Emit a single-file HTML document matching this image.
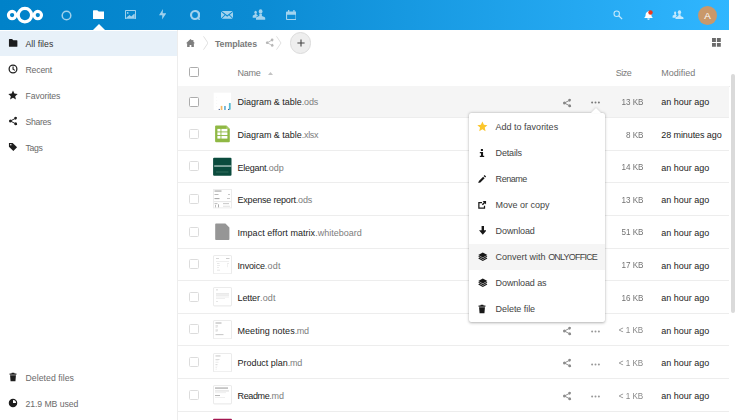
<!DOCTYPE html>
<html><head><meta charset="utf-8"><title>Files - Nextcloud</title>
<style>
*{box-sizing:border-box;margin:0;padding:0}
html,body{width:736px;height:420px;overflow:hidden;background:#fff;font-family:"Liberation Sans",sans-serif;font-size:9px;color:#222}
#hdr{position:absolute;left:0;top:0;width:729.3px;height:29.5px;background:linear-gradient(90deg,#0082c9 0%,#0b8bd3 35%,#30b6ff 100%)}
#hdr svg{position:absolute}
#side{position:absolute;left:0;top:29.7px;width:177.6px;height:391px;background:#fff;border-right:1px solid #ededed}
.nav{position:absolute;left:0;width:177px;height:26px;line-height:28.6px;color:#6a6a6a;font-size:8.7px}
.nav.act{background:linear-gradient(#fff 0,#fff 1.3px,#e8f1f9 1.3px,#e8f1f9 100%);color:#333}
.nic{position:absolute;left:7.5px;top:8px;width:10px;height:10px;line-height:0;opacity:.88}
.ntx{position:absolute;left:25.5px;top:0;white-space:nowrap}
.row{position:absolute;left:178px;width:551.1px;height:32.7px;border-bottom:1px solid #ededed}
.row.hl{background:#f5f5f5}
.row span{position:absolute;white-space:nowrap}
.chk{left:10.6px;top:calc(50% - 5.1px);width:10px;height:10px;border:1px solid #dcdcdc;border-radius:1.5px;background:#fff}
.chk.dark{border-color:#acacac}
.thumb{left:35.3px;top:calc(50% - 9.7px);width:19px;height:19px;line-height:0}
.fname{left:59.5px;top:0;color:#1c1c1c;font-size:9px}
.fname .ext{position:static;color:#7d7d7d}
.a-share{left:383.7px;top:calc(50% - 3.9px);line-height:0;opacity:.45}
.a-more{left:412.6px;top:calc(50% + .4px);line-height:0;opacity:.4}
.a-more.on{opacity:.5;margin-top:-1px}
.fsize{right:85.7px;top:-.5px;color:#727272;transform:scaleX(.9);transform-origin:100% 50%}
.fmod{left:483.3px;top:0;color:#1c1c1c}
#thead{position:absolute;left:178px;top:56px;width:551.5px;height:31px;border-bottom:1px solid #ededed;color:#7a7a7a}
#thead span{position:absolute;white-space:nowrap;line-height:34.5px}
#menu{position:absolute;left:469.3px;top:112.5px;width:136.1px;height:209.6px;background:#fff;border-radius:2px;box-shadow:0 .8px 3px rgba(0,0,0,.3),0 0 1px rgba(0,0,0,.12)}
#menu:before{content:"";position:absolute;left:121.3px;top:-5px;width:0;height:0;border-left:5px solid transparent;border-right:5px solid transparent;border-bottom:5.5px solid #fff;filter:drop-shadow(0 -1px 1px rgba(0,0,0,.12))}
.mi{position:relative;height:26px;line-height:26.4px;top:1.5px;color:#444}
.mi.hov{background:#f5f5f5}
.mic{position:absolute;left:7.8px;top:7.5px;line-height:0;opacity:.9}
.mtx{position:absolute;left:26.3px;top:0;white-space:nowrap}
.oo{letter-spacing:-.79px}
#sb{position:absolute;left:730.9px;top:73.9px;width:4.2px;height:239.3px;border-radius:2px;background:#dadada}
</style></head><body>
<div id="hdr">
<svg style="left:0;top:0" width="50" height="29" viewBox="0 0 50 29"><g fill="none" stroke="#fff"><circle cx="24.9" cy="15.1" r="6.7" stroke-width="3.2"/><circle cx="12.1" cy="15.1" r="3.7" stroke-width="3.1"/><circle cx="37.8" cy="15.1" r="3.7" stroke-width="3.1"/></g></svg>
<svg style="left:60.8px;top:9.7px;opacity:.62" width="11" height="11" viewBox="0 0 11 11"><circle cx="5.5" cy="5.5" r="4.3" fill="none" stroke="#fff" stroke-width="1.5"/></svg>
<svg style="left:92.8px;top:9.6px" width="11.4" height="9.6" viewBox="0 0 16 13.5"><path d="M0 1.2a1 1 0 0 1 1-1h5l2 2h7a1 1 0 0 1 1 1v9.3a1 1 0 0 1-1 1H1a1 1 0 0 1-1-1z" fill="#fff"/></svg>
<svg style="left:92.5px;top:24px" width="12" height="6" viewBox="0 0 12 6"><path d="M0 6L6 0l6 6z" fill="#fff"/></svg>
<svg style="left:125.2px;top:9.9px;opacity:.62" width="11" height="9.2" viewBox="0 0 11 9.2"><path d="M.8 0h9.4a.8.8 0 0 1 .800.8v7.6a.8.8 0 0 1-.800.8H.8a.8.8 0 0 1-.800-.800V.8A.8.8 0 0 1 .8 0zm.200 1v7.2h9V1zM1.4 7.9V7.5L4.6 5.1l1.6 1.5 3-2.8.5.4v3.7zM2.7 2.1a.85.85 0 1 1 0 1.7.85.85 0 0 1 0-1.7z" fill="#fff" fill-rule="evenodd"/></svg>
<svg style="left:159px;top:9.3px;opacity:.62" width="7.4" height="10.4" viewBox="0 0 7.4 10.4"><path d="M4 0L0 6.3h3.3L3.1 10.4 7.4 4.3H3.7z" fill="#fff"/></svg>
<svg style="left:189.5px;top:9.7px;opacity:.62" width="10.6" height="10.2" viewBox="0 0 10.6 10.2"><path d="M5 0a5 5 0 1 0 2.8 9.15c.7.6 1.6.950 2.6 1.05-.6-.7-.9-1.4-1-2.2A5 5 0 0 0 5 0zm0 2.1a2.9 2.9 0 1 1 0 5.8 2.9 2.9 0 0 1 0-5.8z" fill="#fff" fill-rule="evenodd"/></svg>
<svg style="left:220.5px;top:11.2px;opacity:.62" width="12.4" height="7.8" viewBox="0 0 16 10"><path d="M.8 0h14.4L8 5.3zM0 .8l4.8 4L0 9.4zM16 .8v8.6l-4.8-4.6zM5.7 5.6L8 7.3l2.3-1.7 4.7 4.4H1z" fill="#fff"/></svg>
<svg style="left:252px;top:9px;opacity:.62" width="14" height="11" viewBox="0 0 14 11"><ellipse cx="8.6" cy="2.5" rx="1.9" ry="2.3" fill="#fff"/><path d="M4 10.8V9c0-.5.3-.9.8-1.1l2.5-1V5h2.6v1.9l2.5 1c.5.2.8.6.8 1.1v1.8z" fill="#fff"/><ellipse cx="3.6" cy="3.3" rx="1.25" ry="1.55" fill="#fff"/><path d="M.7 8.8V7.1c0-.5.3-.8.7-.95L2.8 5.6V4.4h1.7V5.6l1.6.9-.9.4c-.6.3-.9.7-.9 1.4v.5z" fill="#fff"/></svg>
<svg style="left:285.6px;top:9.8px;opacity:.62" width="10.6" height="10" viewBox="0 0 10.6 10"><path d="M2 0h1.3v1.5h4V0h1.3v1.5H9.6a1 1 0 0 1 1 1V9a1 1 0 0 1-1 1H1a1 1 0 0 1-1-1V2.5a1 1 0 0 1 1-1H2zM1.1 4.7V8.9h8.4V4.7z" fill="#fff" fill-rule="evenodd"/></svg>
<svg style="left:613.4px;top:9.5px;opacity:.72" width="10" height="10" viewBox="0 0 14 14"><circle cx="5.2" cy="5.2" r="3.8" fill="none" stroke="#fff" stroke-width="1.5"/><path d="M8 8l4.8 4.8" stroke="#fff" stroke-width="1.8"/></svg>
<svg style="left:643px;top:9.5px" width="11" height="11" viewBox="0 0 16 16"><path d="M8 1.5c.7 0 1.2.5 1.2 1.1 2 .6 3 2.3 3 4.4 0 3 1.3 3.5 2 4.5H1.8c.7-1 2-1.5 2-4.5 0-2.1 1-3.8 3-4.4 0-.6.5-1.1 1.2-1.1zM6.2 12.5h3.6a1.8 1.8 0 0 1-3.6 0z" fill="#fff"/></svg>
<svg style="left:648.3px;top:9.5px" width="5" height="5" viewBox="0 0 5 5"><circle cx="2.5" cy="2.5" r="2.2" fill="#ee3a1d"/></svg>
<svg style="left:672.4px;top:9.7px;opacity:.72" width="12.2" height="9.6" viewBox="0 0 14 11"><ellipse cx="8.6" cy="2.5" rx="1.9" ry="2.3" fill="#fff"/><path d="M4 10.8V9c0-.5.3-.9.8-1.1l2.5-1V5h2.6v1.9l2.5 1c.5.2.8.6.8 1.1v1.8z" fill="#fff"/><ellipse cx="3.6" cy="3.3" rx="1.25" ry="1.55" fill="#fff"/><path d="M.7 8.8V7.1c0-.5.3-.8.7-.95L2.8 5.6V4.4h1.7V5.6l1.6.9-.9.4c-.6.3-.9.7-.9 1.4v.5z" fill="#fff"/></svg>
<div style="position:absolute;left:698px;top:5.5px;width:19px;height:19px;border-radius:50%;background:#c9986a;color:#fff;font-size:9.8px;line-height:19px;text-align:center">A</div>
</div>

<div id="side">
<div class="nav act" style="top:0.3px"><span class="nic"><svg width="10" height="10" viewBox="0 0 16 16"><path d="M1.5 2.5a1 1 0 0 1 1-1h4l2 2h5.5a1 1 0 0 1 1 1v8.5a1 1 0 0 1-1 1h-11.5a1 1 0 0 1-1-1z" fill="#000"/></svg></span><span class="ntx" style="letter-spacing:0.03px">All files</span></div><div class="nav" style="top:26.3px"><span class="nic"><svg width="10" height="10" viewBox="0 0 16 16"><circle cx="8" cy="8" r="6.2" fill="none" stroke="#000" stroke-width="2"/><path d="M7.2 3.8h1.8v4l2.6 1.6-.9 1.4-3.5-2.1z" fill="#000"/></svg></span><span class="ntx" style="letter-spacing:-0.18px">Recent</span></div><div class="nav" style="top:52.3px"><span class="nic"><svg width="10" height="10" viewBox="0 0 16 16"><path d="M8 .8l2.2 4.9 5.3.5-4 3.6 1.2 5.3L8 12.3 3.3 15.1l1.2-5.3-4-3.6 5.3-.5z" fill="#000"/></svg></span><span class="ntx" style="letter-spacing:-0.1px">Favorites</span></div><div class="nav" style="top:78.3px"><span class="nic"><svg width="10" height="10" viewBox="0 0 16 16"><path d="M12.2 1a2.3 2.3 0 0 0-2.2 2.9L5.4 6.3a2.3 2.3 0 1 0 0 3.4L10 12.1a2.3 2.3 0 1 0 .6-1.2L6 8.5a2.3 2.3 0 0 0 0-1l4.6-2.4A2.3 2.3 0 1 0 12.2 1z" fill="#000"/></svg></span><span class="ntx" style="letter-spacing:-0.33px">Shares</span></div><div class="nav" style="top:104.3px"><span class="nic"><svg width="10" height="10" viewBox="0 0 16 16"><path d="M1.5 1.5h6l7 7-6 6-7-7zM4.5 3.3a1.2 1.2 0 1 0 0 2.4 1.2 1.2 0 0 0 0-2.4z" fill="#000" fill-rule="evenodd"/></svg></span><span class="ntx" style="letter-spacing:-0.3px">Tags</span></div><div class="nav" style="top:334.3px"><span class="nic"><svg style="margin-left:.4px" width="10" height="10" viewBox="0 0 16 16"><path d="M6 1.3h4l.6 1.1h2.9v1.9H2.5V2.4h2.9zM3.3 5.3h9.4l-.8 9.4H4.1z" fill="#000"/></svg></span><span class="ntx" style="letter-spacing:0.05px">Deleted files</span></div><div class="nav" style="top:360.3px"><span class="nic"><svg width="10" height="10" viewBox="0 0 16 16"><path d="M8 1.2a6.8 6.8 0 1 0 0 13.6 6.8 6.8 0 0 0 0-13.6zm0 2a4.8 4.8 0 0 1 4.8 4.8H8z" fill="#000" fill-rule="evenodd"/></svg></span><span class="ntx" style="letter-spacing:-0.08px">21.9 MB used</span></div>
</div>

<div id="crumbs" style="position:absolute;left:178px;top:30px;width:551px;height:26px">
<svg style="position:absolute;left:8.2px;top:8.6px;opacity:.5" width="9" height="8.5" viewBox="0 0 16 15"><path d="M8 0l3 2.8V1.5h2.2v3.4L16 7.5h-2V15H9.5v-4.5h-3V15H2V7.5H0z" fill="#000"/></svg>
<svg style="position:absolute;left:24.5px;top:6px" width="5.5" height="14" viewBox="0 0 5.5 14"><path d="M.5.3l4.5 6.7-4.5 6.7" fill="none" stroke="#e0e0e0" stroke-width="1"/></svg>
<span style="position:absolute;left:37px;top:0;line-height:28.5px;font-weight:bold;font-size:8.8px;letter-spacing:-.1px;color:#7a7a7a;white-space:nowrap">Templates</span>
<svg style="position:absolute;left:86.6px;top:8px;opacity:.28" width="9.4" height="9.4" viewBox="0 0 16 16"><path d="M12.2 1a2.3 2.3 0 0 0-2.2 2.9L5.4 6.3a2.3 2.3 0 1 0 0 3.4L10 12.1a2.3 2.3 0 1 0 .6-1.2L6 8.5a2.3 2.3 0 0 0 0-1l4.6-2.4A2.3 2.3 0 1 0 12.2 1z" fill="#000"/></svg>
<svg style="position:absolute;left:98.3px;top:6px" width="5.5" height="14" viewBox="0 0 5.5 14"><path d="M.5.3l4.5 6.7-4.5 6.7" fill="none" stroke="#e0e0e0" stroke-width="1"/></svg>
<div style="position:absolute;left:111.9px;top:2.3px;width:21.6px;height:21.6px;border-radius:50%;background:#eee;border:1px solid #dbdbdb"></div>
<svg style="position:absolute;left:118.7px;top:9.1px" width="8" height="8" viewBox="0 0 8 8"><path d="M4 .4v7.2M.4 4h7.2" stroke="#444" stroke-width="1.1"/></svg>
<svg style="position:absolute;left:534.2px;top:8.2px;opacity:.58" width="8.8" height="8.8" viewBox="0 0 9 9"><path d="M0 0h4v4H0zM5 0h4v4H5zM0 5h4v4H0zM5 5h4v4H5z" fill="#000"/></svg>
</div>

<div id="thead">
<span class="chk dark" style="left:10.6px;top:11px;width:10px;height:10px;border:1px solid #acacac;border-radius:1.5px"></span>
<span style="left:59.5px;letter-spacing:-.25px">Name</span>
<svg style="position:absolute;left:90.3px;top:16px;opacity:.5" width="5" height="3" viewBox="0 0 5 3"><path d="M0 3L2.5 0 5 3z" fill="#888"/></svg>
<span style="left:437.8px;letter-spacing:-.55px">Size</span>
<span style="left:483.3px">Modified</span>
</div>

<div class="row hl" style="top:86.3px;height:31.7px;line-height:33px"><span class="chk dark"></span><span class="thumb"><svg width="19" height="19.4" viewBox="0 0 19 19" preserveAspectRatio="none"><rect x=".7" y=".65" width="17.3" height="17" fill="#fff"/><rect x="5.7" y="16.6" width="1.1" height="1" fill="#34508c"/><rect x="7.7" y="13.6" width="1.7" height="4" fill="#f6b863"/><rect x="11.2" y="13.7" width="1.5" height="3.9" fill="#4fa6d2"/><rect x="15" y="16.6" width="1.4" height="1" fill="#34508c"/><rect x="15.9" y="10.8" width="1.8" height="6.5" fill="#56b9d0"/><rect x="3.3" y="4.8" width=".8" height=".5" fill="#ececec"/><rect x="3.3" y="7.8" width=".8" height=".5" fill="#ececec"/><rect x="3.3" y="10.8" width=".8" height=".5" fill="#ececec"/><rect x="3.3" y="13.8" width=".8" height=".5" fill="#ececec"/></svg></span><span class="fname" style="letter-spacing:-0.02px">Diagram &amp; table<span class="ext" style="letter-spacing:-0.15px">.ods</span></span><span class="a-share"><svg class="ic-share" width="10" height="10" viewBox="0 0 16 16"><path d="M12.2 1a2.3 2.3 0 0 0-2.2 2.9L5.4 6.3a2.3 2.3 0 1 0 0 3.4L10 12.1a2.3 2.3 0 1 0 .6-1.2L6 8.5a2.3 2.3 0 0 0 0-1l4.6-2.4A2.3 2.3 0 1 0 12.2 1z" fill="#000"/></svg></span><span class="a-more on"><svg class="ic-more" width="9" height="3" viewBox="0 0 9 3"><circle cx="1.1" cy="1.5" r="1" /><circle cx="4.5" cy="1.5" r="1"/><circle cx="7.9" cy="1.5" r="1"/></svg></span><span class="fsize">13 KB</span><span class="fmod">an hour ago</span></div><div class="row" style="top:118px;height:32.63px;line-height:34.7px"><span class="chk"></span><span class="thumb"><svg width="19" height="19.4" viewBox="0 0 19 19" preserveAspectRatio="none"><path d="M3.1 1.5h10.2l3.5 3.5v11.9a1 1 0 0 1-1 1H3.1a1 1 0 0 1-1-1V2.5a1 1 0 0 1 1-1z" fill="#8fb844"/><path d="M13.3 1.5l3.5 3.5h-3.5z" fill="#a9cb6a"/><g fill="#fff"><rect x="4.4" y="4.8" width="3.1" height="2.5"/><rect x="8.4" y="4.8" width="6" height="2.5"/><rect x="4.4" y="8.2" width="3.1" height="2.6"/><rect x="8.4" y="8.2" width="6" height="2.6"/><rect x="4.4" y="11.7" width="3.1" height="2.6"/><rect x="8.4" y="11.7" width="6" height="2.6"/></g></svg></span><span class="fname" style="letter-spacing:-0.02px">Diagram &amp; table<span class="ext" style="letter-spacing:-0.3px">.xlsx</span></span><span class="a-share"><svg class="ic-share" width="10" height="10" viewBox="0 0 16 16"><path d="M12.2 1a2.3 2.3 0 0 0-2.2 2.9L5.4 6.3a2.3 2.3 0 1 0 0 3.4L10 12.1a2.3 2.3 0 1 0 .6-1.2L6 8.5a2.3 2.3 0 0 0 0-1l4.6-2.4A2.3 2.3 0 1 0 12.2 1z" fill="#000"/></svg></span><span class="a-more"><svg class="ic-more" width="9" height="3" viewBox="0 0 9 3"><circle cx="1.1" cy="1.5" r="1" /><circle cx="4.5" cy="1.5" r="1"/><circle cx="7.9" cy="1.5" r="1"/></svg></span><span class="fsize">8 KB</span><span class="fmod"><span style="position:static;letter-spacing:-.09px">28 minutes ago</span></span></div><div class="row" style="top:150.63px;height:32.63px;line-height:34.7px"><span class="chk"></span><span class="thumb"><svg width="19" height="19.4" viewBox="0 0 19 19" preserveAspectRatio="none"><rect x=".1" y=".8" width="18.4" height="17.5" rx="1" fill="#0b4b3d"/><rect x="1.2" y="8.2" width="17.2" height="1.3" fill="#dfeae6" opacity=".8"/><rect x="3" y="14.4" width="12.5" height=".6" fill="#4b8271"/></svg></span><span class="fname" style="letter-spacing:-0.24px">Elegant<span class="ext" style="letter-spacing:0px">.odp</span></span><span class="a-share"><svg class="ic-share" width="10" height="10" viewBox="0 0 16 16"><path d="M12.2 1a2.3 2.3 0 0 0-2.2 2.9L5.4 6.3a2.3 2.3 0 1 0 0 3.4L10 12.1a2.3 2.3 0 1 0 .6-1.2L6 8.5a2.3 2.3 0 0 0 0-1l4.6-2.4A2.3 2.3 0 1 0 12.2 1z" fill="#000"/></svg></span><span class="a-more"><svg class="ic-more" width="9" height="3" viewBox="0 0 9 3"><circle cx="1.1" cy="1.5" r="1" /><circle cx="4.5" cy="1.5" r="1"/><circle cx="7.9" cy="1.5" r="1"/></svg></span><span class="fsize">14 KB</span><span class="fmod">an hour ago</span></div><div class="row" style="top:183.26px;height:32.63px;line-height:34.7px"><span class="chk"></span><span class="thumb"><svg width="19" height="19.4" viewBox="0 0 19 19" preserveAspectRatio="none"><rect x=".5" y=".5" width="18" height="18" fill="#fff" stroke="#ececec"/><rect x="1.5" y="1.5" width="7" height="1" fill="#999"/><rect x="1.5" y="5" width="4" height=".8" fill="#aaa"/><rect x="15" y="5" width="2" height=".8" fill="#bbb"/><rect x="1.5" y="9" width="5" height=".9" fill="#999"/><rect x="14" y="9" width="3" height=".8" fill="#bbb"/><rect x="1" y="12.3" width="17" height=".5" fill="#ccc"/><rect x="1.5" y="14" width="3" height=".8" fill="#aaa"/><rect x="10" y="14" width="6" height=".8" fill="#bbb"/><rect x="2" y="15.5" width=".8" height="2.5" fill="#aaa"/><rect x="5" y="15" width=".8" height="3" fill="#999"/><rect x="10" y="16.5" width="7" height=".6" fill="#ccc"/></svg></span><span class="fname" style="letter-spacing:-0.2px">Expense report<span class="ext" style="letter-spacing:-0.15px">.ods</span></span><span class="a-share"><svg class="ic-share" width="10" height="10" viewBox="0 0 16 16"><path d="M12.2 1a2.3 2.3 0 0 0-2.2 2.9L5.4 6.3a2.3 2.3 0 1 0 0 3.4L10 12.1a2.3 2.3 0 1 0 .6-1.2L6 8.5a2.3 2.3 0 0 0 0-1l4.6-2.4A2.3 2.3 0 1 0 12.2 1z" fill="#000"/></svg></span><span class="a-more"><svg class="ic-more" width="9" height="3" viewBox="0 0 9 3"><circle cx="1.1" cy="1.5" r="1" /><circle cx="4.5" cy="1.5" r="1"/><circle cx="7.9" cy="1.5" r="1"/></svg></span><span class="fsize">13 KB</span><span class="fmod">an hour ago</span></div><div class="row" style="top:215.89px;height:32.63px;line-height:34.7px"><span class="chk"></span><span class="thumb"><svg width="19" height="19.4" viewBox="0 0 19 19" preserveAspectRatio="none"><path d="M3 1.4h9.4l4 4v11.4a.8.8 0 0 1-.8.8H3a.8.8 0 0 1-.8-.8V2.2a.8.8 0 0 1 .8-.8z" fill="#969696"/></svg></span><span class="fname" style="letter-spacing:0.04px">Impact effort matrix<span class="ext" style="letter-spacing:0px">.whiteboard</span></span><span class="a-share"><svg class="ic-share" width="10" height="10" viewBox="0 0 16 16"><path d="M12.2 1a2.3 2.3 0 0 0-2.2 2.9L5.4 6.3a2.3 2.3 0 1 0 0 3.4L10 12.1a2.3 2.3 0 1 0 .6-1.2L6 8.5a2.3 2.3 0 0 0 0-1l4.6-2.4A2.3 2.3 0 1 0 12.2 1z" fill="#000"/></svg></span><span class="a-more"><svg class="ic-more" width="9" height="3" viewBox="0 0 9 3"><circle cx="1.1" cy="1.5" r="1" /><circle cx="4.5" cy="1.5" r="1"/><circle cx="7.9" cy="1.5" r="1"/></svg></span><span class="fsize">51 KB</span><span class="fmod">an hour ago</span></div><div class="row" style="top:248.52px;height:32.63px;line-height:34.7px"><span class="chk"></span><span class="thumb"><svg width="19" height="19.4" viewBox="0 0 19 19" preserveAspectRatio="none"><rect x=".5" y=".5" width="18" height="18" rx="1" fill="#fff" stroke="#ebebeb"/><rect x="3" y="3" width="3" height=".7" fill="#c8c8c8"/><rect x="13" y="3" width="3.5" height=".7" fill="#b8b8b8"/><rect x="3" y="6" width="13" height=".5" fill="#e0e0e0"/><rect x="4" y="8" width="2.5" height=".6" fill="#d6d6d6"/><rect x="14" y="8" width="2" height=".6" fill="#e0e0e0"/><rect x="4" y="10" width="3" height=".6" fill="#e0e0e0"/><rect x="14.5" y="9" width=".5" height="3" fill="#e0e0e0"/><rect x="4" y="12" width="2" height=".6" fill="#e0e0e0"/><rect x="4" y="14.5" width="3" height=".6" fill="#d6d6d6"/></svg></span><span class="fname" style="letter-spacing:-0.17px">Invoice<span class="ext" style="letter-spacing:0.22px">.odt</span></span><span class="a-share"><svg class="ic-share" width="10" height="10" viewBox="0 0 16 16"><path d="M12.2 1a2.3 2.3 0 0 0-2.2 2.9L5.4 6.3a2.3 2.3 0 1 0 0 3.4L10 12.1a2.3 2.3 0 1 0 .6-1.2L6 8.5a2.3 2.3 0 0 0 0-1l4.6-2.4A2.3 2.3 0 1 0 12.2 1z" fill="#000"/></svg></span><span class="a-more"><svg class="ic-more" width="9" height="3" viewBox="0 0 9 3"><circle cx="1.1" cy="1.5" r="1" /><circle cx="4.5" cy="1.5" r="1"/><circle cx="7.9" cy="1.5" r="1"/></svg></span><span class="fsize">17 KB</span><span class="fmod">an hour ago</span></div><div class="row" style="top:281.15px;height:32.63px;line-height:34.7px"><span class="chk"></span><span class="thumb"><svg width="19" height="19.4" viewBox="0 0 19 19" preserveAspectRatio="none"><rect x=".5" y=".5" width="18" height="18" rx="1" fill="#fff" stroke="#ebebeb"/><rect x="3" y="2.5" width="2" height=".7" fill="#c8c8c8"/><rect x="3" y="6" width="13" height=".5" fill="#d6d6d6"/><rect x="3" y="7.2" width="13" height=".5" fill="#e0e0e0"/><rect x="3" y="8.4" width="13" height=".5" fill="#d6d6d6"/><rect x="3" y="9.6" width="13" height=".5" fill="#e0e0e0"/><rect x="3" y="10.8" width="9" height=".5" fill="#e0e0e0"/><rect x="3" y="14" width="2" height=".6" fill="#d6d6d6"/></svg></span><span class="fname" style="letter-spacing:-0.1px">Letter<span class="ext" style="letter-spacing:0.22px">.odt</span></span><span class="a-share"><svg class="ic-share" width="10" height="10" viewBox="0 0 16 16"><path d="M12.2 1a2.3 2.3 0 0 0-2.2 2.9L5.4 6.3a2.3 2.3 0 1 0 0 3.4L10 12.1a2.3 2.3 0 1 0 .6-1.2L6 8.5a2.3 2.3 0 0 0 0-1l4.6-2.4A2.3 2.3 0 1 0 12.2 1z" fill="#000"/></svg></span><span class="a-more"><svg class="ic-more" width="9" height="3" viewBox="0 0 9 3"><circle cx="1.1" cy="1.5" r="1" /><circle cx="4.5" cy="1.5" r="1"/><circle cx="7.9" cy="1.5" r="1"/></svg></span><span class="fsize">16 KB</span><span class="fmod">an hour ago</span></div><div class="row" style="top:313.78px;height:32.63px;line-height:34.7px"><span class="chk"></span><span class="thumb"><svg width="19" height="19.4" viewBox="0 0 19 19" preserveAspectRatio="none"><rect x=".5" y=".5" width="18" height="18" rx="1" fill="#fff" stroke="#ebebeb"/><rect x="2.5" y="2.5" width="6" height=".9" fill="#a6a6a6"/><rect x="2.5" y="5.5" width="2.5" height=".7" fill="#b8b8b8"/><rect x="2.5" y="7" width="2" height=".5" fill="#d6d6d6"/><rect x="2.5" y="9.5" width="2.5" height=".7" fill="#b8b8b8"/><rect x="2.5" y="11" width="2" height=".5" fill="#d6d6d6"/><rect x="2.5" y="14" width="8" height=".8" fill="#b8b8b8"/></svg></span><span class="fname" style="letter-spacing:0.05px">Meeting notes<span class="ext" style="letter-spacing:-0.4px">.md</span></span><span class="a-share"><svg class="ic-share" width="10" height="10" viewBox="0 0 16 16"><path d="M12.2 1a2.3 2.3 0 0 0-2.2 2.9L5.4 6.3a2.3 2.3 0 1 0 0 3.4L10 12.1a2.3 2.3 0 1 0 .6-1.2L6 8.5a2.3 2.3 0 0 0 0-1l4.6-2.4A2.3 2.3 0 1 0 12.2 1z" fill="#000"/></svg></span><span class="a-more"><svg class="ic-more" width="9" height="3" viewBox="0 0 9 3"><circle cx="1.1" cy="1.5" r="1" /><circle cx="4.5" cy="1.5" r="1"/><circle cx="7.9" cy="1.5" r="1"/></svg></span><span class="fsize" style="color:#888">&lt; 1 KB</span><span class="fmod">an hour ago</span></div><div class="row" style="top:346.41px;height:32.63px;line-height:34.7px"><span class="chk"></span><span class="thumb"><svg width="19" height="19.4" viewBox="0 0 19 19" preserveAspectRatio="none"><rect x=".5" y=".5" width="18" height="18" rx="1" fill="#fff" stroke="#ebebeb"/><rect x="2.5" y="2.5" width="5" height=".8" fill="#b8b8b8"/><rect x="2.5" y="6" width="4" height=".6" fill="#c8c8c8"/><rect x="2.5" y="7.5" width="3" height=".5" fill="#e0e0e0"/><rect x="2.5" y="9" width="3" height=".5" fill="#e0e0e0"/><rect x="2.5" y="11" width="2" height=".6" fill="#c8c8c8"/><rect x="2.5" y="12.5" width="2" height=".5" fill="#e0e0e0"/><rect x="2.5" y="14" width="1.5" height=".5" fill="#e0e0e0"/><rect x="2.5" y="15.5" width="1.5" height=".5" fill="#e0e0e0"/></svg></span><span class="fname" style="letter-spacing:-0.03px">Product plan<span class="ext" style="letter-spacing:-0.25px">.md</span></span><span class="a-share"><svg class="ic-share" width="10" height="10" viewBox="0 0 16 16"><path d="M12.2 1a2.3 2.3 0 0 0-2.2 2.9L5.4 6.3a2.3 2.3 0 1 0 0 3.4L10 12.1a2.3 2.3 0 1 0 .6-1.2L6 8.5a2.3 2.3 0 0 0 0-1l4.6-2.4A2.3 2.3 0 1 0 12.2 1z" fill="#000"/></svg></span><span class="a-more"><svg class="ic-more" width="9" height="3" viewBox="0 0 9 3"><circle cx="1.1" cy="1.5" r="1" /><circle cx="4.5" cy="1.5" r="1"/><circle cx="7.9" cy="1.5" r="1"/></svg></span><span class="fsize" style="color:#888">&lt; 1 KB</span><span class="fmod">an hour ago</span></div><div class="row" style="top:379.04px;height:32.63px;line-height:34.7px"><span class="chk"></span><span class="thumb"><svg width="19" height="19.4" viewBox="0 0 19 19" preserveAspectRatio="none"><rect x=".5" y=".5" width="18" height="18" rx="1" fill="#fff" stroke="#ebebeb"/><rect x="2" y="2.5" width="13" height="1" fill="#9a9a9a"/><rect x="2" y="5" width="14" height=".5" fill="#d6d6d6"/><rect x="2" y="6.2" width="14" height=".5" fill="#e0e0e0"/><rect x="2" y="7.4" width="11" height=".5" fill="#e0e0e0"/><rect x="2" y="10" width="5" height=".8" fill="#a6a6a6"/><rect x="2" y="12" width="10" height=".5" fill="#e0e0e0"/></svg></span><span class="fname" style="letter-spacing:-0.37px">Readme<span class="ext" style="letter-spacing:-0.2px">.md</span></span><span class="a-share"><svg class="ic-share" width="10" height="10" viewBox="0 0 16 16"><path d="M12.2 1a2.3 2.3 0 0 0-2.2 2.9L5.4 6.3a2.3 2.3 0 1 0 0 3.4L10 12.1a2.3 2.3 0 1 0 .6-1.2L6 8.5a2.3 2.3 0 0 0 0-1l4.6-2.4A2.3 2.3 0 1 0 12.2 1z" fill="#000"/></svg></span><span class="a-more"><svg class="ic-more" width="9" height="3" viewBox="0 0 9 3"><circle cx="1.1" cy="1.5" r="1" /><circle cx="4.5" cy="1.5" r="1"/><circle cx="7.9" cy="1.5" r="1"/></svg></span><span class="fsize" style="color:#888">&lt; 1 KB</span><span class="fmod">an hour ago</span></div><div class="row" style="top:411.67px;height:32.63px;line-height:34.7px"><span class="chk"></span><span class="thumb"><svg width="19" height="19.4" viewBox="0 0 19 19" preserveAspectRatio="none"><rect y="0.8" width="19" height="17.4" rx="1" fill="#a3164f"/></svg></span></div>

<div id="menu"><div class="mi"><span class="mic"><svg style="margin:-.5px 0 0 -.3px" width="10.8" height="10.8" viewBox="0 0 16 16"><path d="M8 .8l2.2 4.9 5.3.5-4 3.6 1.2 5.3L8 12.3 3.3 15.1l1.2-5.3-4-3.6 5.3-.500z" fill="#fbc016"/></svg></span><span class="mtx" style="letter-spacing:0px">Add to favorites</span></div><div class="mi"><span class="mic"><svg width="10" height="10" viewBox="0 0 16 16"><path d="M6.2 1.5h3.3v3.2H6.2zM4.5 6.5h5.2v6h1.8v2H4.5v-2h1.9v-4H4.5z" fill="#000"/></svg></span><span class="mtx" style="letter-spacing:-0.17px">Details</span></div><div class="mi"><span class="mic"><svg width="10" height="10" viewBox="0 0 16 16"><path d="M12.2 1.4l2.4 2.4-1.6 1.6-2.4-2.4zM9.8 4.2l2.4 2.4-6.8 6.8-3.4 1 1-3.4z" fill="#000"/></svg></span><span class="mtx" style="letter-spacing:-0.45px">Rename</span></div><div class="mi"><span class="mic"><svg width="10" height="10" viewBox="0 0 16 16"><path d="M2 3h6v2H4v7h7V9h2v5H2z" fill="#000"/><path d="M9 1.5h5.5V7l-1.9-1.9L9.4 8.3 7.7 6.6l3.2-3.2z" fill="#000"/></svg></span><span class="mtx" style="letter-spacing:0px">Move or copy</span></div><div class="mi"><span class="mic"><svg style="margin:.7px 0 0 1.7px" width="7.6" height="8.7" viewBox="0 0 7.6 8.7"><path d="M2.6 0h2.4v4.2h2.6L3.8 8.7 0 4.2h2.6z" fill="#000"/></svg></span><span class="mtx" style="letter-spacing:-0.11px">Download</span></div><div class="mi hov"><span class="mic"><svg style="margin:.2px 0 0 .9px" width="9.6" height="9.4" viewBox="0 0 10 9.2"><path d="M5 .2L9.8 2.8 5 5.4.2 2.8zM.2 4.6L1.3 4 5 6 8.7 4l1.1.6L5 7.2zM.2 6.4L1.3 5.8 5 7.8l3.7-2 1.1.6L5 9z" fill="#000"/></svg></span><span class="mtx" style="letter-spacing:0px">Convert with <span class="oo">ONLYOFFICE</span></span></div><div class="mi"><span class="mic"><svg style="margin:.2px 0 0 .9px" width="9.6" height="9.4" viewBox="0 0 10 9.2"><path d="M5 .2L9.8 2.8 5 5.4.2 2.8zM.2 4.6L1.3 4 5 6 8.7 4l1.1.6L5 7.2zM.2 6.4L1.3 5.8 5 7.8l3.7-2 1.1.6L5 9z" fill="#000"/></svg></span><span class="mtx" style="letter-spacing:-0.11px">Download as</span></div><div class="mi"><span class="mic"><svg style="margin-left:.4px" width="10" height="10" viewBox="0 0 16 16"><path d="M6 1.3h4l.6 1.1h2.9v1.9H2.5V2.4h2.9zM3.3 5.3h9.4l-.8 9.4H4.1z" fill="#000"/></svg></span><span class="mtx" style="letter-spacing:-0.05px">Delete file</span></div></div>
<div id="sb"></div>
</body></html>
